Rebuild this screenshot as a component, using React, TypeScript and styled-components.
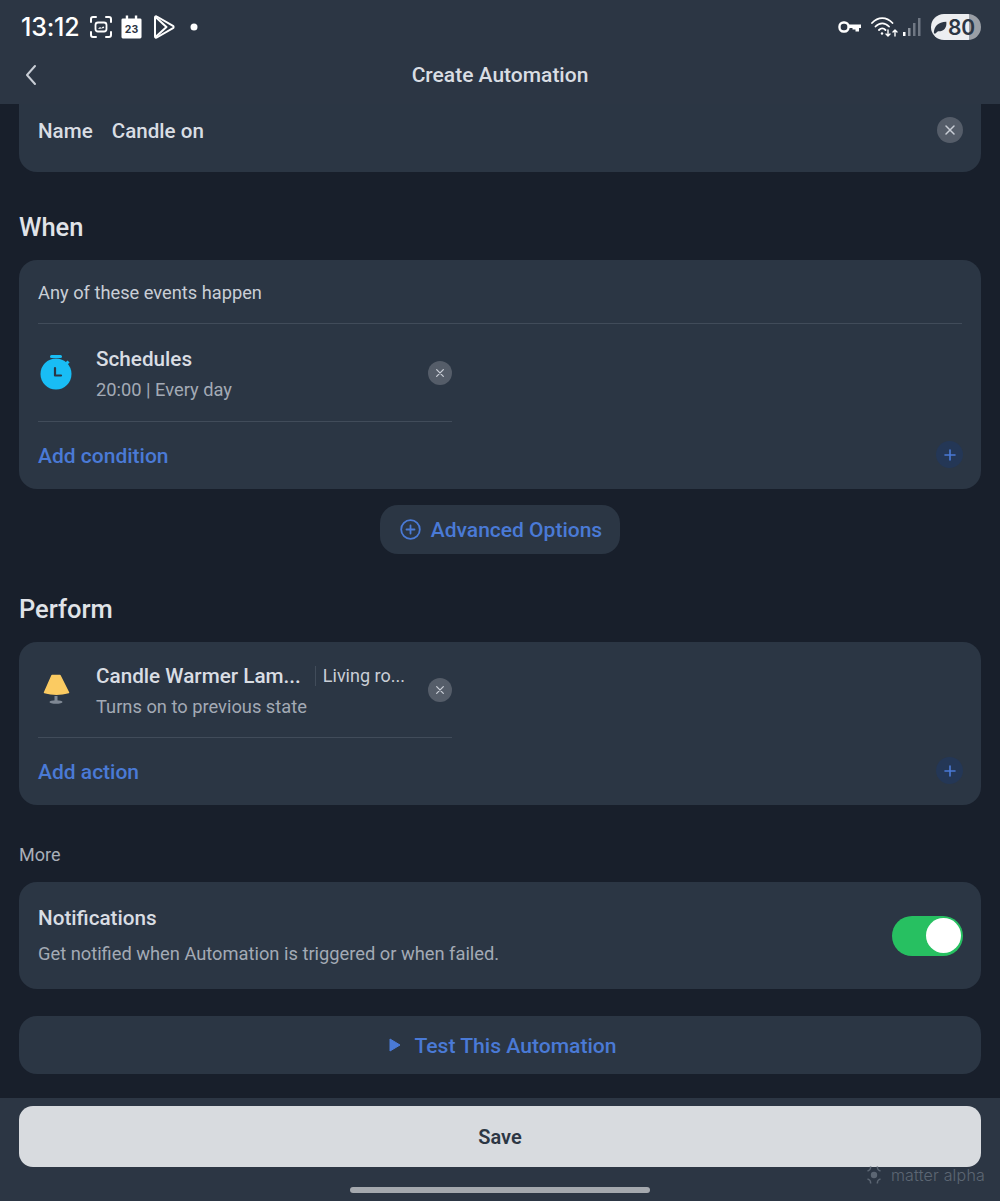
import React from "react";
import styled, { createGlobalStyle } from "styled-components";

const Global = createGlobalStyle`
  html, body { margin: 0; padding: 0; background: #181f2b; }
  body { font-family: Roboto, "Noto Sans", sans-serif; }
  * { box-sizing: border-box; }
`;

const Page = styled.div`
  width: 1000px;
  height: 1201px;
  display: flex;
  flex-direction: column;
  overflow: hidden;
  background: #181f2b;
`;
const Header = styled.header`
  height: 104px;
  flex: none;
  background: #2c3644;
  display: flex;
  flex-direction: column;
`;
const StatusBar = styled.div`
  height: 54px;
  padding: 0 19px 0 21px;
  display: flex;
  align-items: center;
  justify-content: space-between;
  color: #fff;
`;
const StatusGroup = styled.div`
  display: flex;
  align-items: center;
`;
const Clock = styled.span`
  font-family: Inter, sans-serif;
  font-size: 25px;
  font-weight: 500;
  margin-right: 10px;
  letter-spacing: -0.2px;
`;
const Battery = styled.div`
  width: 50px;
  height: 26px;
  border-radius: 13px;
  margin-left: 9px;
  background: linear-gradient(90deg, #eceef1 0 76%, #9a9fa6 76%);
  color: #2c3644;
  display: flex;
  align-items: center;
  padding-left: 2px;
  font-family: Inter, sans-serif;
  font-size: 21px;
  font-weight: 600;
  letter-spacing: -0.3px;
`;
const TitleBar = styled.div`
  height: 44px;
  padding: 0 20px;
  display: grid;
  grid-template-columns: 40px 1fr 40px;
  align-items: center;
  margin-top: -1px;
`;
const Title = styled.h1`
  margin: 0;
  text-align: center;
  color: #d9dde3;
  font-size: 21px;
  font-weight: 500;
`;
const Content = styled.main`
  flex: 1;
  padding: 0 19px;
  display: flex;
  flex-direction: column;
`;
const Card = styled.section<{ $flatTop?: boolean }>`
  background: #2b3644;
  border-radius: ${(p) => (p.$flatTop ? "0 0 18px 18px" : "18px")};
  padding: 0 18px 0 19px;
`;
const NameRow = styled.div`
  height: 68px;
  padding-bottom: 14px;
  display: flex;
  align-items: center;
  color: #d9dde3;
  font-size: 20.6px;
  font-weight: 500;
`;
const NameLabel = styled.span`
  margin-right: 19px;
`;
const Spacer = styled.div`
  flex: 1;
`;
const SectionTitle = styled.h2`
  margin: 0;
  height: 88px;
  padding-top: 22px;
  display: flex;
  align-items: center;
  color: #e0e3e8;
  font-size: 25.5px;
  font-weight: 500;
`;
const CardHeading = styled.div`
  height: 64px;
  padding-top: 1px;
  margin-right: 1px;
  display: flex;
  align-items: center;
  border-bottom: 1px solid #414c5a;
  color: #c9ced6;
  font-size: 18.25px;
`;
const ItemRow = styled.div<{ $h: number }>`
  width: 414px;
  height: ${(p) => p.$h}px;
  display: grid;
  grid-template-columns: 58px 1fr 24px;
  align-items: center;
  border-bottom: 1px solid #414c5a;
`;
const ItemIcon = styled.div`
  display: flex;
  align-items: center;
`;
const ItemText = styled.div`
  min-width: 0;
  display: flex;
  flex-direction: column;
  gap: 8px;
  padding-top: 2px;
`;
const ItemTitleRow = styled.div`
  display: flex;
  align-items: center;
`;
const ItemTitle = styled.span`
  color: #d9dde3;
  font-size: 20.7px;
  font-weight: 500;
  line-height: 24px;
  white-space: nowrap;
`;
const ItemPlace = styled.span`
  color: #c9ced6;
  font-size: 18px;
  line-height: 20px;
  margin-left: 14px;
  padding-left: 7px;
  border-left: 1px solid #414c5a;
  white-space: nowrap;
`;
const ItemSub = styled.span`
  color: #a3aab5;
  font-size: 18.3px;
  line-height: 22px;
`;
const CloseButton = styled.span<{ $size: number; $lift?: number }>`
  width: ${(p) => p.$size}px;
  height: ${(p) => p.$size}px;
  border-radius: 50%;
  background: #555d69;
  display: flex;
  align-items: center;
  justify-content: center;
  margin-top: ${(p) => (p.$lift ? `-${p.$lift}px` : "0")};
`;
const AddRow = styled.div`
  height: 67px;
  display: flex;
  align-items: center;
  justify-content: space-between;
  color: #4a7ad6;
  font-size: 21px;
  font-weight: 500;
`;
const AddDot = styled.span`
  width: 27px;
  height: 27px;
  border-radius: 50%;
  background: #243756;
  display: flex;
  align-items: center;
  justify-content: center;
  margin-top: -2px;
`;
const AdvancedWrap = styled.div`
  display: flex;
  justify-content: center;
  padding-top: 16px;
`;
const AdvancedButton = styled.div`
  width: 240px;
  height: 49px;
  border-radius: 18px;
  background: #2b3644;
  display: flex;
  align-items: center;
  justify-content: center;
  gap: 10px;
  padding-left: 2px;
  color: #4a7ad6;
  font-size: 21px;
  font-weight: 500;
`;
const MoreLabel = styled.div`
  height: 77px;
  padding-top: 22px;
  display: flex;
  align-items: center;
  color: #a9afb9;
  font-size: 18px;
`;
const NotifyRow = styled.div`
  height: 107px;
  display: flex;
  align-items: center;
  justify-content: space-between;
`;
const NotifyText = styled.div`
  display: flex;
  flex-direction: column;
  gap: 13px;
`;
const Switch = styled.div`
  width: 71px;
  height: 40px;
  border-radius: 20px;
  background: #27c061;
  display: flex;
  align-items: center;
  justify-content: flex-end;
  padding-right: 2px;
`;
const Knob = styled.div`
  width: 35px;
  height: 35px;
  border-radius: 50%;
  background: #fff;
`;
const TestButton = styled.div`
  margin-top: 27px;
  height: 58px;
  border-radius: 18px;
  background: #2b3644;
  display: flex;
  align-items: center;
  justify-content: center;
  gap: 13px;
  padding-left: 6px;
  color: #4a7ad6;
  font-size: 21.1px;
  font-weight: 500;
`;
const Footer = styled.footer`
  height: 103px;
  flex: none;
  background: #2c3644;
  padding: 8px 19px 0;
  position: relative;
`;
const SaveButton = styled.div`
  height: 61px;
  border-radius: 14px;
  background: #d8dbdf;
  display: flex;
  align-items: center;
  justify-content: center;
  color: #2c3644;
  font-size: 20px;
  font-weight: 600;
`;
const HomeBar = styled.div`
  width: 300px;
  height: 6px;
  border-radius: 3px;
  background: #a5a9af;
  margin: 20px auto 0;
`;
const Watermark = styled.div`
  position: absolute;
  right: 15px;
  top: 67px;
  display: flex;
  align-items: center;
  gap: 7px;
  color: #5c6673;
  font-family: Inter, sans-serif;
  font-weight: 300;
  font-size: 16px;
  letter-spacing: 0.2px;
`;

const X = ({ s }: { s: number }) => (
  <svg width={s} height={s} viewBox="0 0 12 12" fill="none" stroke="#c9ced6" strokeWidth="1.5" strokeLinecap="round">
    <path d="M2 2l8 8M10 2l-8 8" />
  </svg>
);
const Plus = () => (
  <svg width="12" height="12" viewBox="0 0 12 12" fill="none" stroke="#4a7ad6" strokeWidth="1.6" strokeLinecap="round">
    <path d="M6 1v10M1 6h10" />
  </svg>
);

export default function App() {
  return (
    <Page>
      <Global />
      <Header>
        <StatusBar>
          <StatusGroup>
            <Clock>13:12</Clock>
            <svg width="24" height="24" viewBox="0 0 24 24" fill="none" stroke="#fff" strokeWidth="2" strokeLinecap="round">
              <path d="M2 7V4a2 2 0 0 1 2-2h3M17 2h3a2 2 0 0 1 2 2v3M22 17v3a2 2 0 0 1-2 2h-3M7 22H4a2 2 0 0 1-2-2v-3" />
              <rect x="6.500" y="7.500" width="11" height="9" rx="2.500" fill="none" strokeWidth="1.800" />
              <path d="M9 14l2-2 1.300 1 2-1.800 1 1.800z" fill="#fff" stroke="none" />
            </svg>
            <svg width="21" height="24" viewBox="0 0 22 24" style={{ marginLeft: 8 }}>
              <path d="M2 3h18a1.500 1.500 0 0 1 1.500 1.500v18A1.500 1.500 0 0 1 20 24H2a1.500 1.500 0 0 1-1.500-1.500v-18A1.500 1.500 0 0 1 2 3zM5 0h2.500v4H5zM14.500 0H17v4h-2.500z" fill="#fff" />
              <text x="11" y="18.500" fontSize="11" fontWeight="700" fontFamily="Inter, sans-serif" textAnchor="middle" fill="#2c3644">23</text>
            </svg>
            <svg width="22" height="24" viewBox="0 0 22 24" fill="none" stroke="#fff" strokeWidth="2" strokeLinejoin="round" style={{ marginLeft: 11 }}>
              <path d="M2 2.500c0-1 1-1.500 1.800-1L20 10.800c.8.500.8 1.900 0 2.400L3.800 22.500c-.8.500-1.800 0-1.800-1z" />
              <path d="M2.500 2l11 10-11 10M9 8l5 4.500" />
            </svg>
            <svg width="8" height="8" viewBox="0 0 8 8" style={{ marginLeft: 15 }}>
              <circle cx="4" cy="4" r="3.500" fill="#fff" />
            </svg>
          </StatusGroup>
          <StatusGroup>
            <svg width="24" height="14" viewBox="0 0 24 14" fill="none" stroke="#fff" strokeWidth="2.400">
              <rect x="1.500" y="2.500" width="9" height="9" rx="4" />
              <path d="M10.500 4.500H23V8H21V11.500H17.500V9.500H14.500V8H10.500z" fill="#fff" stroke="none" />
            </svg>
            <svg width="28" height="24" viewBox="0 0 28 24" fill="none" stroke="#fff" strokeWidth="1.800" strokeLinecap="round" style={{ marginLeft: 9 }}>
              <path d="M1 8c6-6.500 14.500-6.500 20.500 0M4.500 11.500c4-4.300 9.500-4.300 13.500 0M8 15c2-2 4.500-2 6.500 0" />
              <circle cx="11" cy="18.500" r="1.200" fill="#fff" stroke="none" />
              <path d="M17 15v6M15 19l2 2 2-2M24 21v-6M22 17l2-2 2 2" strokeWidth="1.400" />
            </svg>
            <svg width="20" height="20" viewBox="0 0 20 20" style={{ marginLeft: 3 }}>
              <rect x="1" y="15" width="2.500" height="4" fill="#fff" />
              <rect x="6" y="11" width="2.500" height="8" fill="#8f96a0" />
              <rect x="11" y="6" width="2.500" height="13" fill="#6f7783" />
              <rect x="16" y="1" width="2.500" height="18" fill="#6f7783" />
            </svg>
            <Battery>
              <svg width="15" height="15" viewBox="0 0 18 18">
                <path d="M1 16C1 8 6 2 16 2c1 8-4 12-10 11.500L2.500 16.500z" fill="#2c3644" />
              </svg>
              <span>80</span>
            </Battery>
          </StatusGroup>
        </StatusBar>
        <TitleBar>
          <svg width="14" height="22" viewBox="0 0 14 22" fill="none" stroke="#c9ced6" strokeWidth="2" strokeLinecap="round" strokeLinejoin="round" style={{ marginLeft: 4 }}>
            <path d="M11 2L3 11l8 9" />
          </svg>
          <Title>Create Automation</Title>
        </TitleBar>
      </Header>
      <Content>
        <Card $flatTop>
          <NameRow>
            <NameLabel>Name</NameLabel>
            <span>Candle on</span>
            <Spacer />
            <CloseButton $size={26} $lift={2}>
              <X s={12} />
            </CloseButton>
          </NameRow>
        </Card>
        <SectionTitle>When</SectionTitle>
        <Card>
          <CardHeading>Any of these events happen</CardHeading>
          <ItemRow $h={98}>
            <ItemIcon>
              <svg width="38" height="38" viewBox="0 0 38 38">
                <rect x="12" y="1" width="12" height="3" rx="1.500" fill="#19bdf5" />
                <rect x="28" y="7" width="3" height="3" fill="#19bdf5" transform="rotate(45 29.500 8.500)" />
                <circle cx="18" cy="20" r="15.500" fill="#19bdf5" />
                <path d="M17 14v7.500h6" fill="none" stroke="#2b3644" strokeWidth="2.200" strokeLinecap="round" strokeLinejoin="round" />
              </svg>
            </ItemIcon>
            <ItemText>
              <ItemTitle>Schedules</ItemTitle>
              <ItemSub>20:00 | Every day</ItemSub>
            </ItemText>
            <CloseButton $size={24}>
              <X s={10} />
            </CloseButton>
          </ItemRow>
          <AddRow>
            Add condition
            <AddDot>
              <Plus />
            </AddDot>
          </AddRow>
        </Card>
        <AdvancedWrap>
          <AdvancedButton>
            <svg width="21" height="21" viewBox="0 0 21 21" fill="none" stroke="#4a7ad6" strokeWidth="1.800" strokeLinecap="round">
              <circle cx="10.500" cy="10.500" r="9.300" />
              <path d="M10.500 6.500v8M6.500 10.500h8" />
            </svg>
            Advanced Options
          </AdvancedButton>
        </AdvancedWrap>
        <SectionTitle>Perform</SectionTitle>
        <Card>
          <ItemRow $h={96}>
            <ItemIcon>
              <svg width="32" height="32" viewBox="0 0 32 32" style={{ marginLeft: 3 }}>
                <path d="M11 1.500h8l8.500 17c-7 2-17 2-24 0z" fill="#fbcb62" stroke="#fbcb62" strokeWidth="1.500" strokeLinejoin="round" />
                <rect x="13.500" y="22" width="3" height="5" fill="#7f8894" />
                <ellipse cx="15" cy="28" rx="6.500" ry="1.800" fill="#7f8894" />
              </svg>
            </ItemIcon>
            <ItemText>
              <ItemTitleRow>
                <ItemTitle>Candle Warmer Lam...</ItemTitle>
                <ItemPlace>Living ro...</ItemPlace>
              </ItemTitleRow>
              <ItemSub>Turns on to previous state</ItemSub>
            </ItemText>
            <CloseButton $size={24}>
              <X s={10} />
            </CloseButton>
          </ItemRow>
          <AddRow>
            Add action
            <AddDot>
              <Plus />
            </AddDot>
          </AddRow>
        </Card>
        <MoreLabel>More</MoreLabel>
        <Card>
          <NotifyRow>
            <NotifyText>
              <ItemTitle>Notifications</ItemTitle>
              <ItemSub>Get notified when Automation is triggered or when failed.</ItemSub>
            </NotifyText>
            <Switch>
              <Knob />
            </Switch>
          </NotifyRow>
        </Card>
        <TestButton>
          <svg width="12" height="14" viewBox="0 0 12 14">
            <path d="M1 1l10 6-10 6z" fill="#4a7ad6" stroke="#4a7ad6" strokeLinejoin="round" />
          </svg>
          Test This Automation
        </TestButton>
      </Content>
      <Footer>
        <SaveButton>Save</SaveButton>
        <HomeBar />
        <Watermark>
          <svg width="20" height="20" viewBox="0 0 20 20" fill="none" stroke="#5c6673" strokeWidth="1.600">
            <circle cx="10" cy="10" r="3.200" fill="#5c6673" stroke="none" />
            <path d="M6.500 1.500c.5 2-1 4-3 4.500M13.500 1.500c-.5 2 1 4 3 4.500M6.500 18.500c.5-2-1-4-3-4.500M13.500 18.500c-.5-2 1-4 3-4.500" />
          </svg>
          matter alpha
        </Watermark>
      </Footer>
    </Page>
  );
}
